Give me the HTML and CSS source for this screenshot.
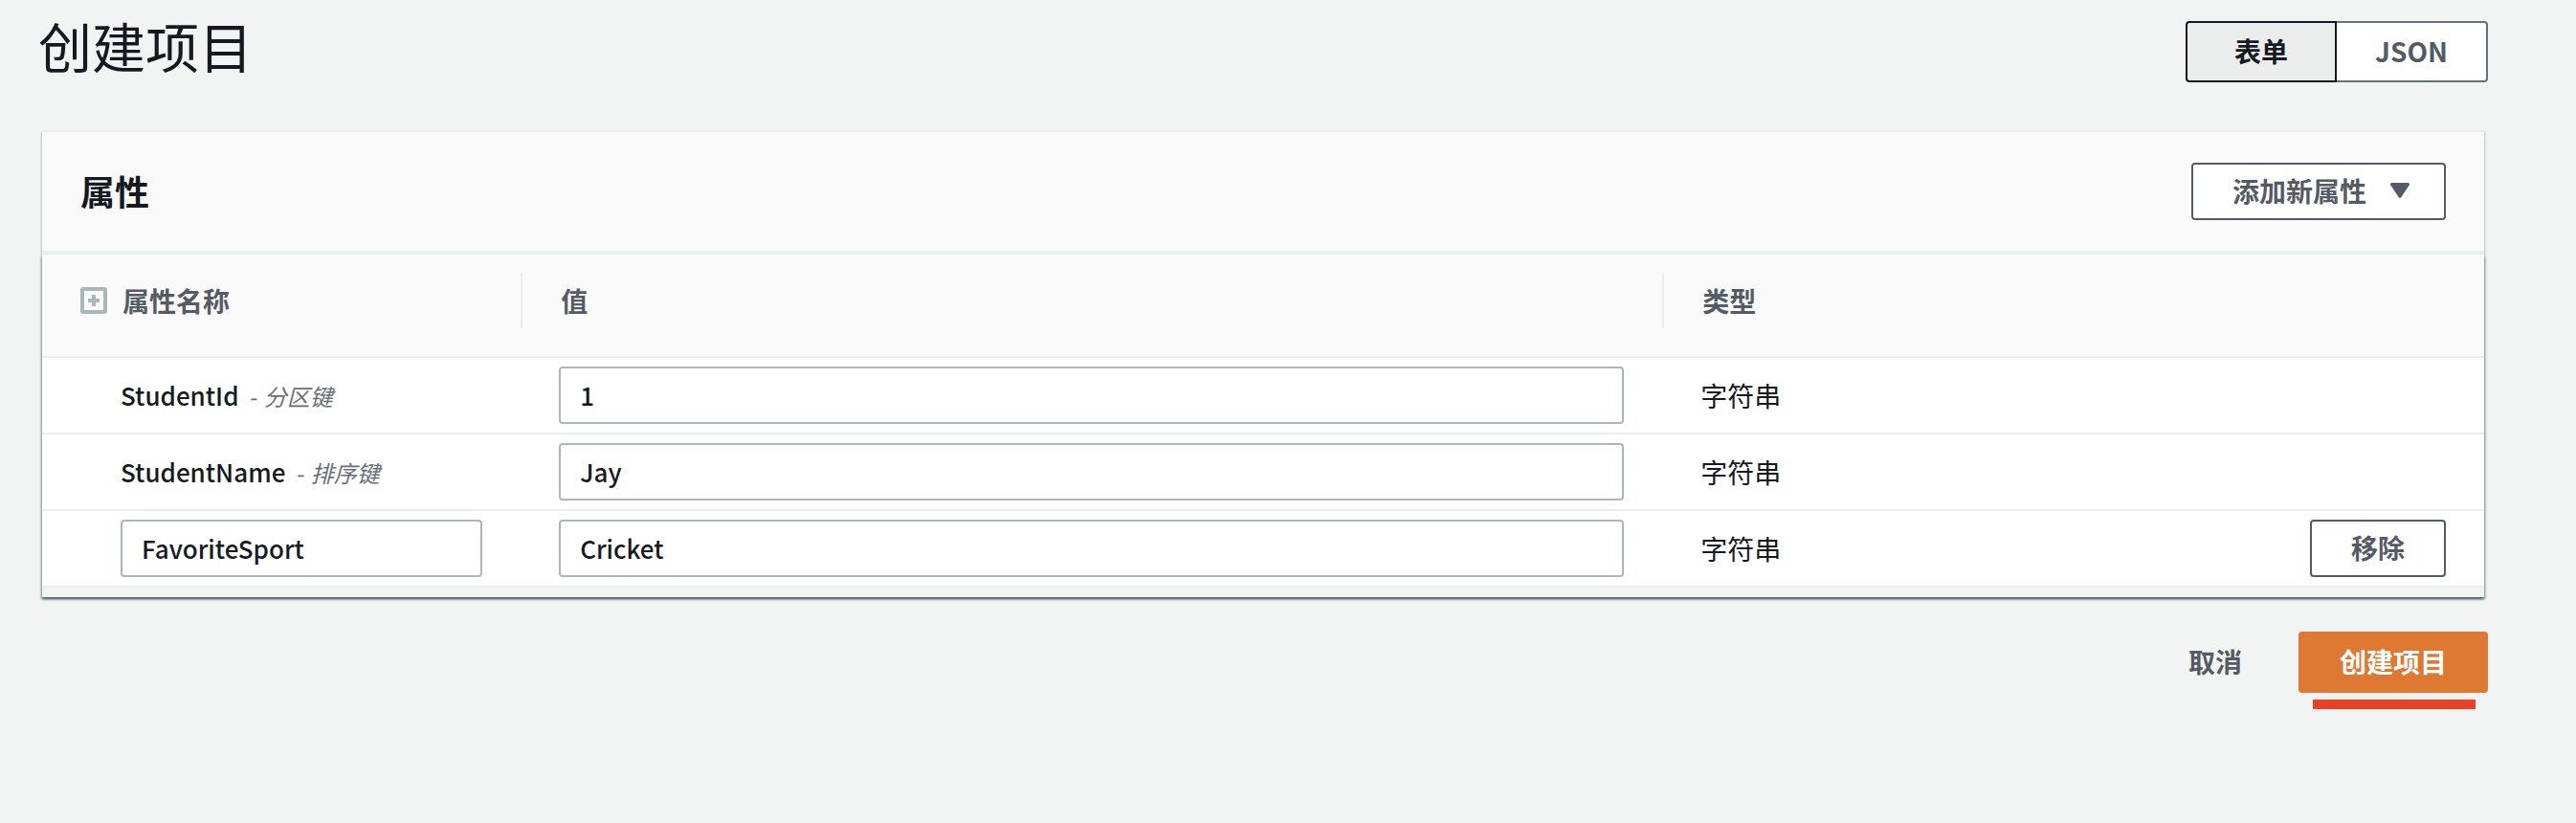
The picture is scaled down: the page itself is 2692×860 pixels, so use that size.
FILE: index.html
```html
<!DOCTYPE html>
<html lang="zh-CN">
<head>
<meta charset="utf-8">
<meta name="viewport" content="width=device-width, initial-scale=1">
<title>创建项目</title>
<link rel="stylesheet" href="styles.css">
</head>
<body>
<main class="page">
  <header class="page-header">
    <h1 class="page-title">创建项目</h1>
    <div class="segmented" role="group" aria-label="视图">
      <button type="button" class="segment segment-active" aria-pressed="true">表单</button>
      <button type="button" class="segment" aria-pressed="false">JSON</button>
    </div>
  </header>

  <section class="card" aria-labelledby="attributes-title">
    <div class="card-header">
      <h2 class="card-title" id="attributes-title">属性</h2>
      <button type="button" class="button">添加新属性
        <svg class="caret" viewBox="0 0 20 16" aria-hidden="true"><path d="M1.500 0h17a1.500 1.500 0 0 1 1.200 2.400l-8.500 12.800a1.500 1.500 0 0 1-2.400 0L.3 2.400A1.500 1.500 0 0 1 1.500 0z"/></svg>
      </button>
    </div>
    <div class="table-wrap">
      <table class="attributes">
        <colgroup>
          <col class="col-name">
          <col class="col-value">
          <col class="col-type">
          <col class="col-action">
        </colgroup>
        <thead>
          <tr>
            <th scope="col">
              <div class="head head-name">
                <button type="button" class="expand" aria-label="展开全部">
                  <svg class="expand-icon" viewBox="0 0 28 28" aria-hidden="true"><rect x="2" y="2" width="24" height="24" rx="1"/><path d="M14 8v12M8 14h12"/></svg>
                </button>
                <span>属性名称</span>
              </div>
            </th>
            <th scope="col"><div class="head head-split">值</div></th>
            <th scope="col"><div class="head head-split">类型</div></th>
            <td></td>
          </tr>
        </thead>
        <tbody>
          <tr>
            <td class="name"><label class="latin" for="v1">StudentId</label><em class="key"><span>-</span><span>分区键</span></em></td>
            <td><input class="field latin" id="v1" type="text" value="1"></td>
            <td>字符串</td>
            <td></td>
          </tr>
          <tr>
            <td class="name"><label class="latin" for="v2">StudentName</label><em class="key"><span>-</span><span>排序键</span></em></td>
            <td><input class="field latin" id="v2" type="text" value="Jay"></td>
            <td>字符串</td>
            <td></td>
          </tr>
          <tr>
            <td class="name"><input class="field latin" type="text" value="FavoriteSport" aria-label="属性名称"></td>
            <td><input class="field latin" type="text" value="Cricket" aria-label="值"></td>
            <td>字符串</td>
            <td class="action"><button type="button" class="button">移除</button></td>
          </tr>
        </tbody>
      </table>
    </div>
  </section>

  <footer class="actions">
    <button type="button" class="button button-link">取消</button>
    <button type="submit" class="button button-primary">创建项目</button>
  </footer>
</main>
</body>
</html>
```
FILE: styles.css
```css
* {
  box-sizing: border-box;
}

body {
  margin: 0;
  background: #f2f4f3;
  color: #16191f;
  font-family: "Noto Sans CJK SC", sans-serif;
  font-size: 28px;
  line-height: 40px;
}

button,
input {
  font: inherit;
}

.page {
  padding: 12px 92px 60px 40px;
}

.page-header {
  display: flex;
  justify-content: space-between;
  align-items: flex-start;
  padding-bottom: 50px;
}

.page-title {
  margin: 0;
  font-size: 56px;
  font-weight: 400;
  line-height: 70px;
}

.segmented {
  display: grid;
  grid-template-columns: 1fr 1fr;
  margin-top: 10px;
}

.segment {
  height: 64px;
  padding: 0 40px 2px;
  border: 2px solid #687078;
  border-left: 0;
  border-radius: 0 4px 4px 0;
  background: #fff;
  color: #545b64;
  font-weight: 700;
}

.segment-active {
  border: 2px solid #16191f;
  border-radius: 4px 0 0 4px;
  background: #ebeded;
  color: #16191f;
}

.card {
  margin: 0 4px;
  border-top: 2px solid #eaeded;
  box-shadow: 0 2px 2px rgba(0, 28, 36, 0.2), 1px 2px 2px rgba(0, 28, 36, 0.15), -1px 2px 2px rgba(0, 28, 36, 0.15);
}

.card-header {
  display: flex;
  justify-content: space-between;
  align-items: center;
  padding: 32px 40px;
  border-bottom: 4px solid #eaeded;
  background: #fafafa;
}

.card-title {
  margin: 0;
  padding-bottom: 2px;
  font-size: 36px;
  font-weight: 700;
  line-height: 48px;
}

.button {
  display: inline-flex;
  justify-content: center;
  align-items: center;
  height: 60px;
  padding: 0 41px 2px;
  border: 2px solid #545b64;
  border-radius: 4px;
  background: #fff;
  color: #545b64;
  font-weight: 700;
}

.caret {
  width: 20px;
  height: 16px;
  margin: 0 -5px 0 25px;
  fill: currentColor;
}

.table-wrap {
  padding-bottom: 10px;
  background: #f2f4f3;
  box-shadow: 0 3px 2px rgba(0, 28, 36, 0.2), 2px 2px 2px rgba(0, 28, 36, 0.15), -2px 2px 2px rgba(0, 28, 36, 0.15);
}

.attributes {
  width: 100%;
  table-layout: fixed;
  border-spacing: 0;
  background: #fff;
}

.col-name {
  width: 19.6%;
}

.col-value {
  width: 46.75%;
}

.col-type {
  width: 22%;
}

.attributes th,
.attributes td {
  border-bottom: 2px solid #eaeded;
  text-align: left;
}

.attributes thead th,
.attributes thead td {
  padding: 19px 0 29px;
  background: #fafafa;
  color: #545b64;
  font-weight: 700;
}

.attributes tbody td {
  height: 80px;
  padding: 9px 40px;
}

.attributes tbody .name {
  padding-left: 82px;
}

.attributes tbody .action {
  text-align: right;
}

.action .button {
  vertical-align: top;
}

.head {
  display: flex;
  align-items: center;
  height: 58px;
  padding: 0 40px;
}

.head-split {
  border-left: 2px solid #eaeded;
}

.head-name {
  gap: 16px;
}

.expand {
  display: flex;
  padding: 0;
  border: 0;
  background: none;
}

.expand-icon {
  width: 28px;
  height: 28px;
  fill: none;
  stroke: #aab7b8;
  stroke-width: 4;
}

.latin {
  font-size: 26px;
  font-weight: 500;
}

.key {
  display: inline-flex;
  gap: 8px;
  margin-left: 10px;
  color: #687078;
  font-size: 24px;
}

.field {
  display: block;
  width: 100%;
  height: 60px;
  padding: 0 20px 2px;
  border: 2px solid #aab7b8;
  border-radius: 4px;
  background: #fff;
  color: #16191f;
}

.actions {
  display: flex;
  justify-content: flex-end;
  gap: 16px;
  padding-top: 36px;
}

.actions .button {
  height: 64px;
}

.button-link {
  border-color: transparent;
  background: transparent;
}

.button-primary {
  position: relative;
  border-color: #dd7932;
  background: #dd7932;
  color: #fff;
}

/* Highlight bar under the primary action */
.button-primary::after {
  content: "";
  position: absolute;
  top: 69px;
  right: 11px;
  left: 13px;
  height: 10px;
  background: #ec3f25;
}
```
